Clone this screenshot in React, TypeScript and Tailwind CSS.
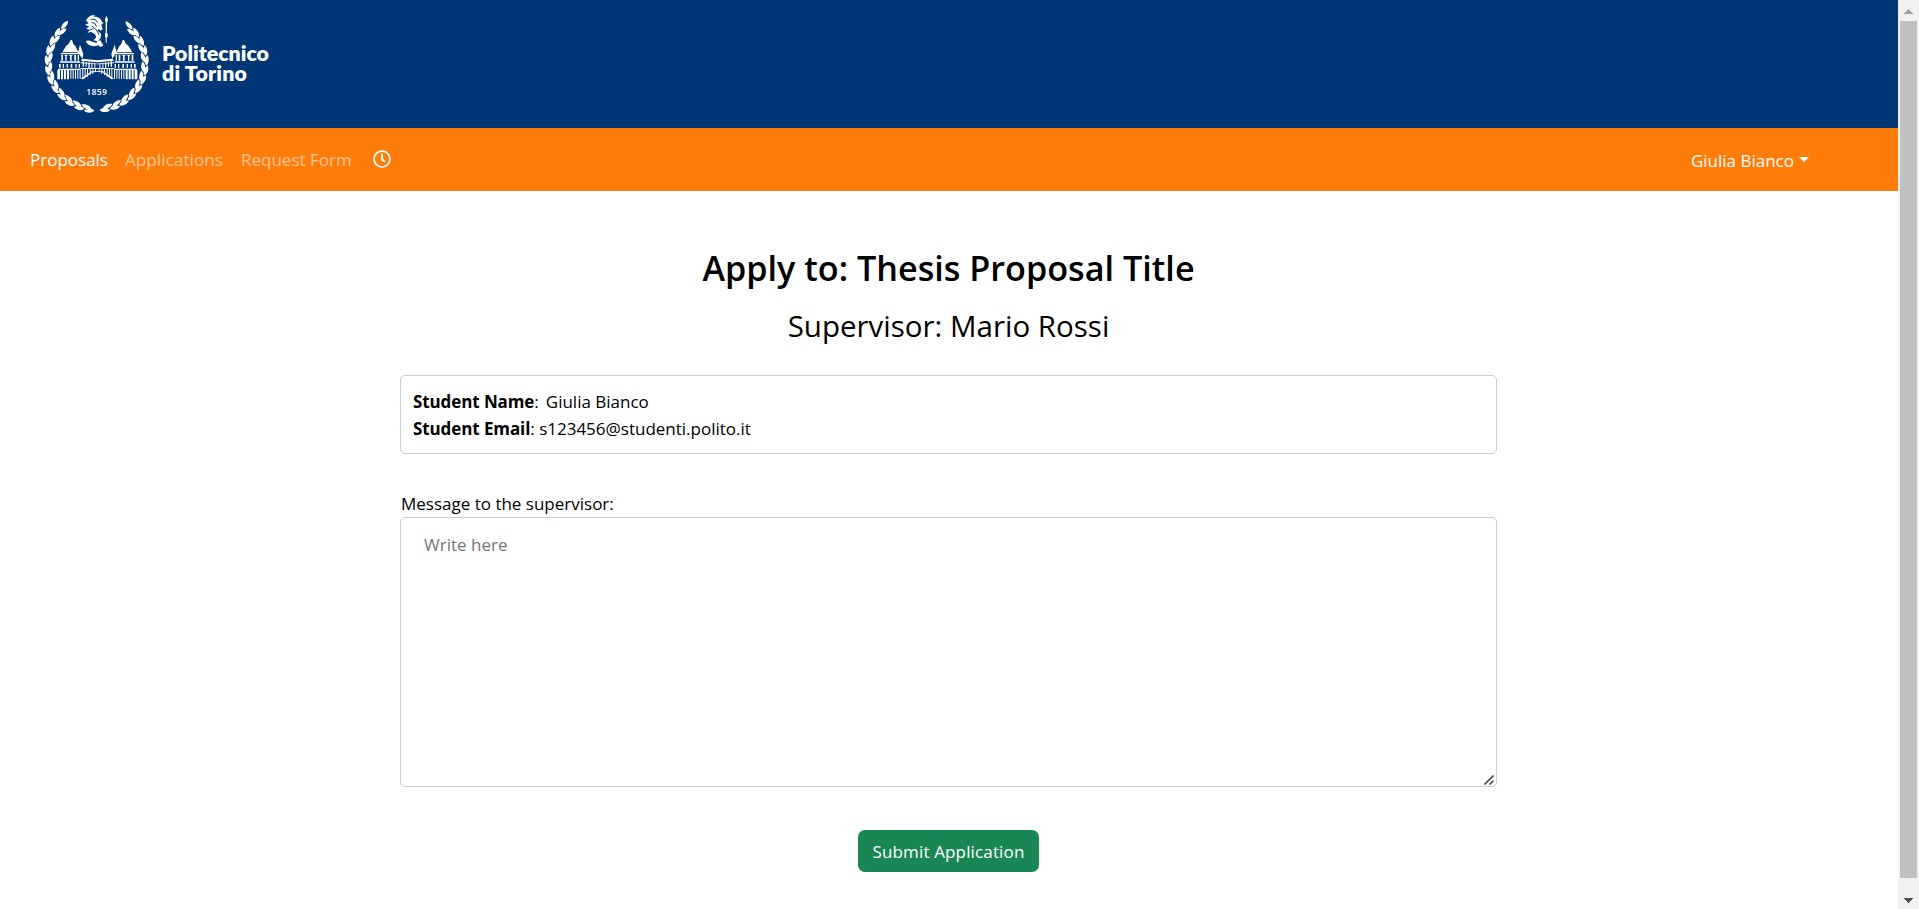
import { FaRegClock } from 'react-icons/fa';

const LEAF = 'M-16 0 C-10 -9 6 -9 16 -1 C8 6 -8 8 -16 0Z';

function Leaf({ x, y, a }: { x: number; y: number; a: number }) {
  return <path d={LEAF} transform={`translate(${x.toFixed(1)} ${y.toFixed(1)}) rotate(${a.toFixed(1)})`} />;
}

function Wreath() {
  const leaves = [];
  for (const side of [-1, 1]) {
    for (let i = 0; i < 12; i++) {
      const t = ((-50 + i * 11.9) * Math.PI) / 180;
      const heading = side === 1 ? (t * 180) / Math.PI - 90 : 270 - (t * 180) / Math.PI;
      leaves.push(
        <Leaf key={`o${side}${i}`} x={201 + side * Math.cos(t) * 150} y={187 + Math.sin(t) * 146} a={heading + side * 10} />,
      );
      if (i > 0) {
        leaves.push(
          <Leaf key={`i${side}${i}`} x={201 + side * Math.cos(t - 0.07) * 140} y={187 + Math.sin(t - 0.07) * 136} a={heading - side * 16} />,
        );
      }
    }
  }
  return <g>{leaves}</g>;
}

function HalfPalace() {
  return (
    <>
      <path d="M122 120 L126 120 L130 132 L136 138 L145 157 L97 157 L108 138 L116 131Z" />
      <path d="M150 134 L160 162 L157 176 L144 157Z" />
      <path d="M92 159 H148 V163 H92Z M94 165 H99 V182 H94Z M104 165 H112 V168 H104Z M106 168 H110 V182 H106Z M118 165 H127 V168 H118Z M120 168 H125 V182 H120Z M133 165 H138 V182 H133Z M143 165 H147 V182 H143Z M90 184 H150 V188 H90Z" />
      <path d="M87 192 H92 V203 H87Z M98 192 H102 V203 H98Z M110 192 H114 V203 H110Z M122 192 H127 V203 H122Z M136 192 H140 V203 H136Z M146 192 H150 V203 H146Z M84 206 H152 V210 H84Z" />
      <path d="M82 210 H90 V238 H82Z M93 210 H99 V238 H93Z M102 210 H108 V238 H102Z M111 210 H117 V238 H111Z M121 210 H124 V236 H121Z M128 210 H131 V236 H128Z M135 210 H138 V236 H135Z M142 210 H145 V236 H142Z M149 210 H152 V236 H149Z" />
      <path d="M157 176 L203 181 V187 L152 182Z M152 187 L203 191 V193 L152 190Z M152 204 H203 V207 H152Z" />
      <path d="M158 184 H162 V200 H158Z M167 186 H170 V200 H167Z M175 187 H179 V204 H175Z M184 188 H187 V204 H184Z M193 189 H196 V204 H193Z" />
      <path d="M157 207 H160 V234 H157Z M164 207 H167 V232 H164Z M171 207 H174 V230 H171Z M179 208 H182 V225 H179Z M187 208 H190 V222 H187Z M195 208 H198 V216 H195Z" />
      <path d="M152 236 L184 214 H203 V216 L186 217 L160 238Z" />
    </>
  );
}

function Emblem() {
  return (
    <svg className="h-[125px] w-[130px] shrink-0" viewBox="0 0 390 375" fill="#fff" aria-hidden="true">
      <Wreath />
      <HalfPalace />
      <g transform="translate(404 0) scale(-1 1)">
        <HalfPalace />
      </g>
      <path d="M168 62 C172 50 184 44 196 46 L190 51 C202 48 213 55 216 66 L221 69 L214 74 L218 88 L211 92 L206 86 L203 92 L214 102 L211 116 L202 124 L190 121 L199 112 L195 103 L184 96 L172 98 L180 90 L168 86 L178 80 L165 74 L176 70Z" />
      <path d="M167 124 C176 116 190 128 200 128 L202 122 L211 121 L220 136 L212 141 L205 136 C190 142 174 138 167 124Z" />
      <path d="M182 58 C192 56 200 60 203 68 M184 68 C193 68 198 72 199 80 M186 79 C194 82 203 94 207 104 M180 90 L190 86" fill="none" stroke="#003576" strokeWidth="3" />
      <path d="M229 47 L234 58 L231 70 L230 128 L227 128 L227 70 L225 58Z M225 100 H233 V112 H225Z" />
      <text x="200.500" y="284" textAnchor="middle" className="font-['Open_Sans',sans-serif] text-[26px] font-semibold tracking-[1px]">
        1859
      </text>
    </svg>
  );
}

function Scrollbar() {
  return (
    <div className="flex w-[21px] shrink-0 flex-col items-center bg-[#f1f1f1] pr-px">
      <svg className="h-[21px] w-[17px]" viewBox="0 0 17 21" fill="#a3a3a3" shapeRendering="crispEdges">
        <path d="M8 9h1v1h1v1h1v1h1v1h1v1H4v-1h1v-1h1v-1h1v-1h1z" />
      </svg>
      <div className="w-[17px] grow bg-[#c1c1c1]" />
      <svg className="h-[31px] w-[17px]" viewBox="0 0 17 31" fill="#505050" shapeRendering="crispEdges">
        <path d="M4 20h9v1h-1v1h-1v1h-1v1H9v1H8v-1H7v-1H6v-1H5v-1H4z" />
      </svg>
    </div>
  );
}

export default function App() {
  return (
    <div className="flex h-[909px] w-full overflow-hidden bg-white font-['Open_Sans','Noto_Sans',sans-serif] text-[17px] leading-[27px] text-black">
      <div className="flex min-w-0 grow flex-col">
        <header className="flex h-32 shrink-0 items-start bg-[#003576] pl-[30px] text-white">
          <Emblem />
          <div className="flex flex-col pt-11 pl-0.5 font-['Lato',sans-serif] text-[21.3px] leading-[19.5px] font-extrabold">
            <span>Politecnico</span>
            <span className="tracking-[0.2px]">di Torino</span>
          </div>
        </header>
        <nav className="flex h-[63px] shrink-0 items-center bg-[#fe7c09] pr-[89px] pb-px pl-[30px] text-white">
          <a className="w-[95px]">Proposals</a>
          <a className="w-[116px] tracking-[0.1px] text-white/55">Applications</a>
          <a className="w-[132px] text-white/55">Request Form</a>
          <FaRegClock className="size-[18px]" />
          <button className="ml-auto flex items-center gap-[5px] pt-0.5">
            Giulia Bianco
            <span className="mb-px border-x-[5px] border-t-[5px] border-x-transparent border-t-white" />
          </button>
        </nav>
        <main className="flex flex-col items-center pt-14 pr-px">
          <h1 className="text-[34.2px] leading-[42px] font-semibold">Apply to: Thesis Proposal Title</h1>
          <h2 className="mt-[18px] text-[29.5px] leading-[37px]">Supervisor: Mario Rossi</h2>
          <section className="mt-[31px] h-[79px] w-[1097px] rounded-[5px] border border-[#ccc] px-3 py-3">
            <p>
              <b className="tracking-[-0.1px]">Student Name</b>:<span className="pl-[7px]">Giulia Bianco</span>
            </p>
            <p>
              <b className="tracking-[-0.1px]">Student Email</b>: s123456@studenti.polito.it
            </p>
          </section>
          <label className="relative mt-9 flex w-[1097px] flex-col">
            <span className="pl-px">Message to the supervisor:</span>
            <textarea
              className="h-[270px] resize-none rounded-[5px] border border-[#ccc] px-[23px] py-[13px] placeholder:text-[#757575]"
              placeholder="Write here"
            />
            <svg className="absolute right-[3px] bottom-[2px] size-[10px]" viewBox="0 0 10 10" fill="none" stroke="#505050" strokeWidth="1.7">
              <path d="M0.500 9.500L9.500 0.500M5.500 9.500L9.500 5.500" />
            </svg>
          </label>
          <button className="mt-[43px] h-[42px] w-[181px] rounded-[7px] bg-[#198754] tracking-[0.14px] text-white">
            Submit Application
          </button>
        </main>
      </div>
      <Scrollbar />
    </div>
  );
}
